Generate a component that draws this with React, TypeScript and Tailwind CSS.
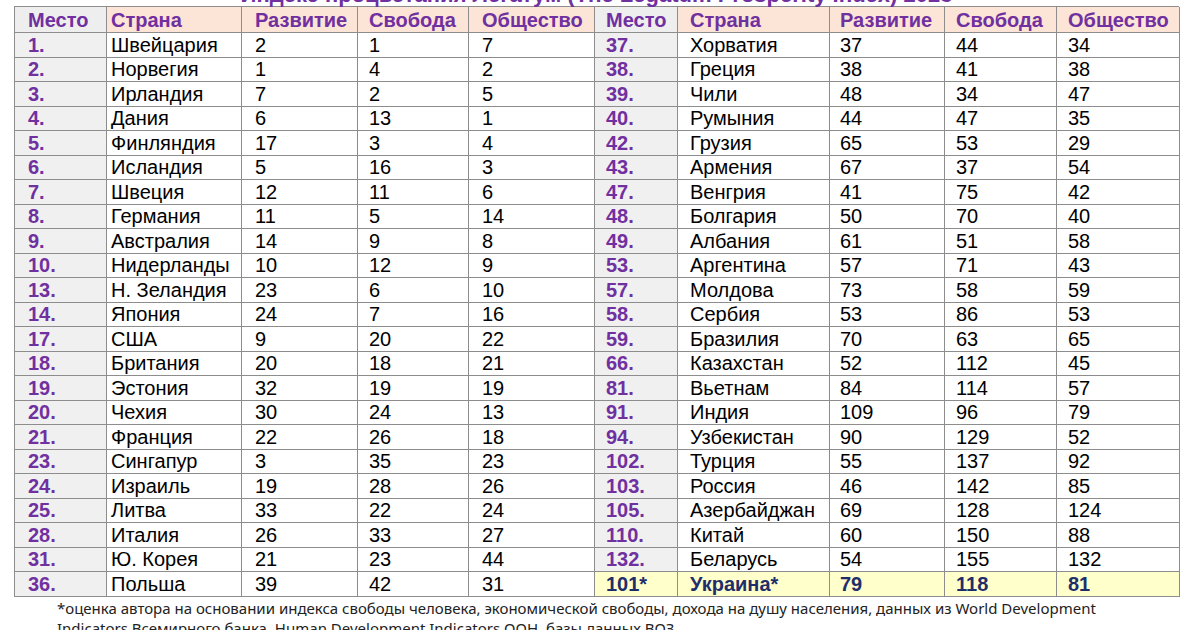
const left: [string, string, string, string, string][] = [
  ["1.", "Швейцария", "2", "1", "7"],
  ["2.", "Норвегия", "1", "4", "2"],
  ["3.", "Ирландия", "7", "2", "5"],
  ["4.", "Дания", "6", "13", "1"],
  ["5.", "Финляндия", "17", "3", "4"],
  ["6.", "Исландия", "5", "16", "3"],
  ["7.", "Швеция", "12", "11", "6"],
  ["8.", "Германия", "11", "5", "14"],
  ["9.", "Австралия", "14", "9", "8"],
  ["10.", "Нидерланды", "10", "12", "9"],
  ["13.", "Н. Зеландия", "23", "6", "10"],
  ["14.", "Япония", "24", "7", "16"],
  ["17.", "США", "9", "20", "22"],
  ["18.", "Британия", "20", "18", "21"],
  ["19.", "Эстония", "32", "19", "19"],
  ["20.", "Чехия", "30", "24", "13"],
  ["21.", "Франция", "22", "26", "18"],
  ["23.", "Сингапур", "3", "35", "23"],
  ["24.", "Израиль", "19", "28", "26"],
  ["25.", "Литва", "33", "22", "24"],
  ["28.", "Италия", "26", "33", "27"],
  ["31.", "Ю. Корея", "21", "23", "44"],
  ["36.", "Польша", "39", "42", "31"],
];

const right: [string, string, string, string, string][] = [
  ["37.", "Хорватия", "37", "44", "34"],
  ["38.", "Греция", "38", "41", "38"],
  ["39.", "Чили", "48", "34", "47"],
  ["40.", "Румыния", "44", "47", "35"],
  ["42.", "Грузия", "65", "53", "29"],
  ["43.", "Армения", "67", "37", "54"],
  ["47.", "Венгрия", "41", "75", "42"],
  ["48.", "Болгария", "50", "70", "40"],
  ["49.", "Албания", "61", "51", "58"],
  ["53.", "Аргентина", "57", "71", "43"],
  ["57.", "Молдова", "73", "58", "59"],
  ["58.", "Сербия", "53", "86", "53"],
  ["59.", "Бразилия", "70", "63", "65"],
  ["66.", "Казахстан", "52", "112", "45"],
  ["81.", "Вьетнам", "84", "114", "57"],
  ["91.", "Индия", "109", "96", "79"],
  ["94.", "Узбекистан", "90", "129", "52"],
  ["102.", "Турция", "55", "137", "92"],
  ["103.", "Россия", "46", "142", "85"],
  ["105.", "Азербайджан", "69", "128", "124"],
  ["110.", "Китай", "60", "150", "88"],
  ["132.", "Беларусь", "54", "155", "132"],
  ["101*", "Украина*", "79", "118", "81"],
];

const headers = ["Место", "Страна", "Развитие", "Свобода", "Общество"];

// left padding per column, measured from the screenshot
const pads = ["pl-[13px]", "pl-[4px]", "pl-[13px]", "pl-[11px]", "pl-[13px]", "pl-[11px]", "pl-[12px]", "pl-[10px]", "pl-[11px]", "pl-[11px]"];

const cell = "flex items-center border-r border-b border-[#8d8d8d] whitespace-nowrap";

const App = () => {
  return (
    <div className="w-[1200px] h-[630px] overflow-hidden bg-white" style={{ fontFamily: '"Liberation Sans", Arial, sans-serif' }}>
      <div className="pl-[14px]">
        <div className="w-[1165px] h-[6px] flex items-end justify-center">
          <div className="text-[22px] leading-[22px] font-bold text-[#7030a0] whitespace-nowrap">
            Индекс процветания Легатум (The Legatum Prosperity Index) 2023
          </div>
        </div>

        <div className="grid grid-cols-[92px_135px_116px_111px_126px_83px_152px_115px_112px_123px] grid-rows-[26px] auto-rows-[24.5px] w-[1165px] border-l border-t border-[#8d8d8d] text-[20px] leading-none">
          {[...headers, ...headers].map((h, i) => (
            <div key={"h" + i}
              className={`${cell} ${pads[i]} font-bold text-[#7030a0] ${i % 5 === 0 ? "bg-[#eeeeee]" : "bg-[#fce4d6]"}`}>
              {h}
            </div>
          ))}

          {left.map((l, r) => {
            const rr = right[r];
            const ukr = r === right.length - 1;
            return [...l, ...rr].map((v, i) => {
              const isRight = i >= 5;
              const place = i % 5 === 0;
              let cls = "text-black";
              if (isRight && ukr) cls = "bg-[#ffffcc] font-bold text-[#1f2d6b]";
              else if (place) cls = "bg-[#f0f0f0] font-bold text-[#7030a0]";
              return (
                <div key={r + "-" + i} className={`${cell} ${pads[i]} ${cls}`}>
                  {v}
                </div>
              );
            });
          })}
        </div>
      </div>

      <div className="pl-[57px] pt-[1px] text-[15px] leading-[20px] text-[#222]" style={{ fontFamily: '"Noto Sans", sans-serif' }}>
        <p>*оценка автора на основании индекса свободы человека, экономической свободы, дохода на душу населения, данных из World Development</p>
        <p>Indicators Всемирного банка, Human Development Indicators ООН, базы данных ВОЗ</p>
      </div>
    </div>
  );
};

export default App;
